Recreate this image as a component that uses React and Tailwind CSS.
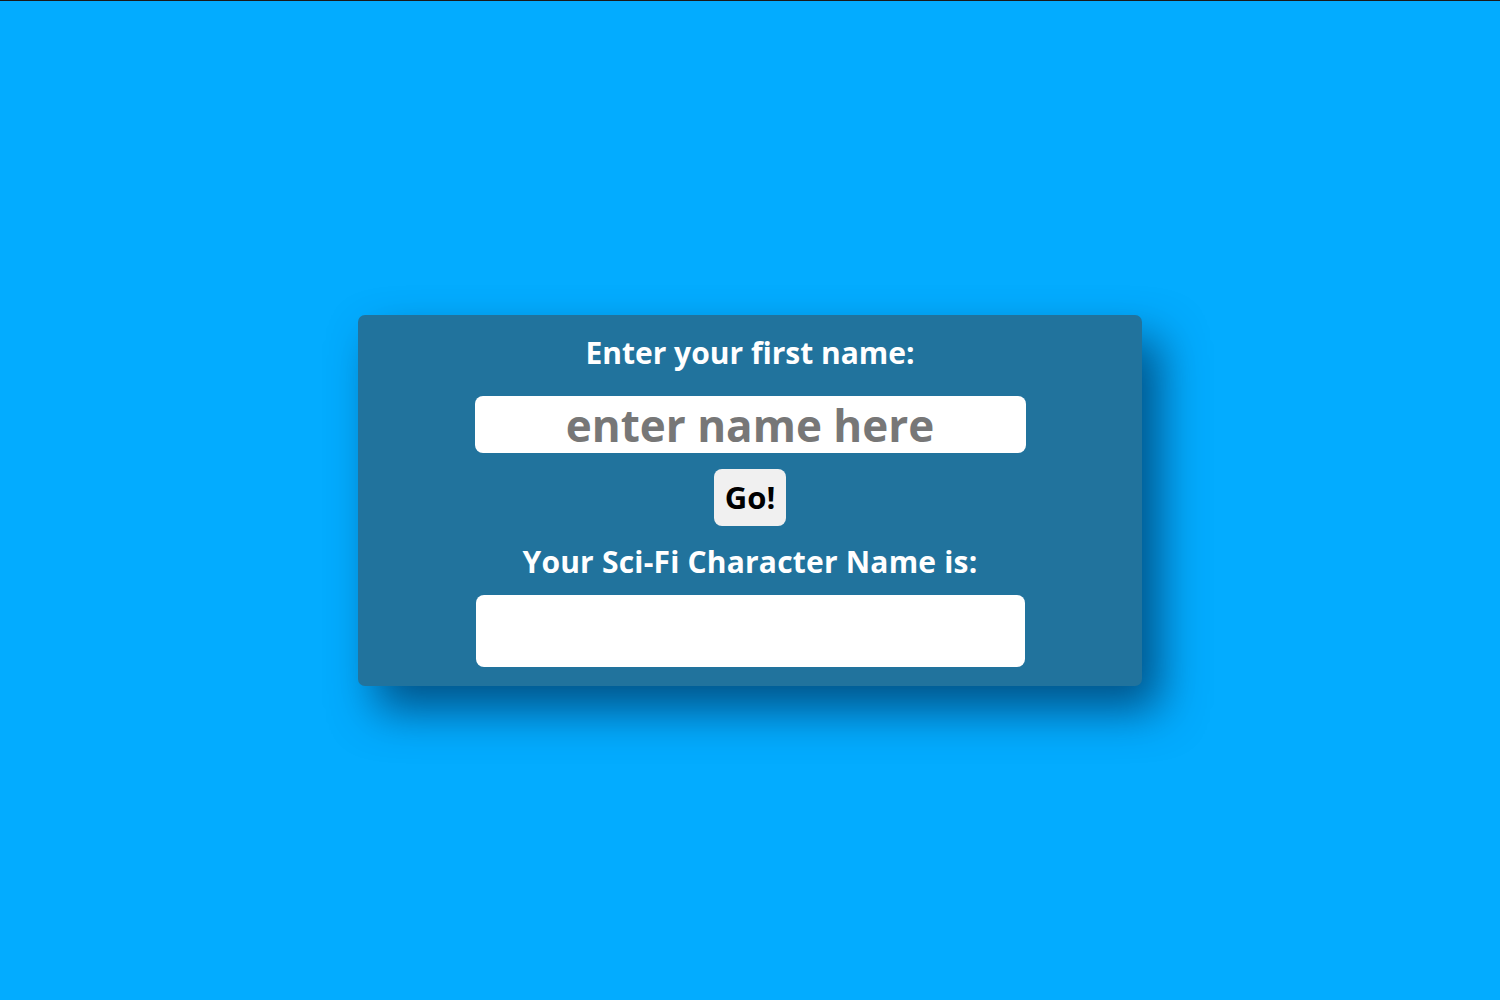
import { useState } from 'react';

export default function App() {
  const [name, setName] = useState('');
  const [result, setResult] = useState('');

  const handleGo = () => {
    setResult(name ? `Captain ${name} Nova` : '');
  };

  return (
    <div
      className="min-h-screen flex items-center justify-center bg-[#03acff] border-t border-[#1a1a1a]"
      style={{ fontFamily: '"Open Sans", "Liberation Sans", sans-serif' }}
    >
      {/* Tarjeta principal */}
      <div className="w-[784px] flex flex-col items-center bg-[#21739d] rounded-[7px] pt-5 pb-[19px] shadow-[18px_24px_45px_rgba(0,45,85,0.7)]">
        <h1 className="text-[30px] leading-[36px] font-bold text-white">
          Enter your first name:
        </h1>

        <input
          type="text"
          value={name}
          onChange={(e) => setName(e.target.value)}
          placeholder="enter name here"
          className="mt-[25px] w-[551px] h-[57px] bg-white rounded-lg text-center text-[44px] font-bold text-[#333] placeholder:text-[#777] outline-none"
        />

        <button
          onClick={handleGo}
          className="mt-4 w-[72px] h-[57px] bg-[#f0f0f0] rounded-lg text-[31px] font-bold text-black"
        >
          Go!
        </button>

        <h2 className="mt-[18px] text-[30px] leading-[36px] font-bold text-white tracking-[0.2px]">
          Your Sci-Fi Character Name is:
        </h2>

        <div className="mt-[15px] w-[549px] h-[72px] bg-white rounded-lg flex items-center justify-center text-[30px] font-bold text-[#333]">
          {result}
        </div>
      </div>
    </div>
  );
}
